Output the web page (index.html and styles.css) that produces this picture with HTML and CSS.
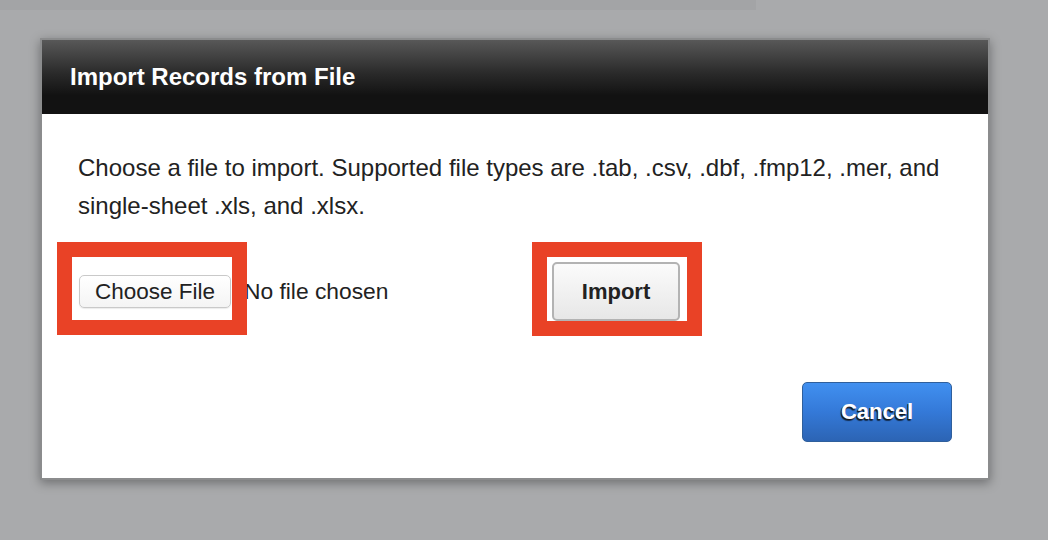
FILE: index.html
```html
<!DOCTYPE html>
<html lang="en">
<head>
<meta charset="utf-8">
<title>Import Records from File</title>
<link rel="stylesheet" href="styles.css">
</head>
<body>
<div class="page-strip"></div>
<div class="dialog">
  <div class="dialog-header">Import Records from File</div>
  <div class="dialog-body">
    <p class="desc">Choose a file to import. Supported file types are .tab, .csv, .dbf, .fmp12, .mer, and single-sheet .xls, and .xlsx.</p>
    <div class="controls">
      <div class="file-input">
        <button class="file-btn" type="button">Choose File</button>
        <span class="file-name">No file chosen</span>
      </div>
      <button class="import-btn" type="button">Import</button>
      <span class="mark mark-file"></span>
      <span class="mark mark-import"></span>
    </div>
    <div class="footer">
      <button class="cancel-btn" type="button">Cancel</button>
    </div>
  </div>
</div>
</body>
</html>
```

FILE: styles.css
```css
html, body {
  margin: 0;
  padding: 0;
}
body {
  background: #a9aaac;
  width: 1048px;
  height: 540px;
  overflow: hidden;
  font-family: "Liberation Sans", Arial, sans-serif;
}
.page-strip {
  width: 756px;
  height: 10px;
  background: #a3a4a6;
}
.dialog {
  width: 946px;
  margin: 28px 0 0 40px;
  border: 2px solid #8b8c8d;
  background: #fff;
  box-shadow: 0 3px 10px rgba(0, 0, 0, 0.35);
}
.dialog-header {
  height: 74px;
  line-height: 74px;
  padding-left: 28px;
  color: #fff;
  font-weight: bold;
  font-size: 24px;
  background: linear-gradient(to bottom, #585858 0%, #2a2a2a 45%, #121212 75%, #121212 100%);
}
.dialog-body {
  padding: 35px 36px 36px 36px;
}
.desc {
  margin: 0;
  font-size: 24px;
  line-height: 38px;
  color: #222;
}
.controls {
  position: relative;
  margin-top: 37px;
  height: 59px;
  display: grid;
  grid-template-columns: 474px auto;
  align-items: center;
}
.file-input {
  display: flex;
  align-items: center;
  margin-left: 1px;
  gap: 13px;
}
.file-btn {
  width: 152px;
  height: 33px;
  padding: 0;
  border: 1px solid #c9c9c9;
  border-radius: 5px;
  background: linear-gradient(to bottom, #ffffff, #f4f4f4);
  box-shadow: 0 1px 1px rgba(0, 0, 0, 0.08);
  font-family: "Liberation Sans", Arial, sans-serif;
  font-size: 22.5px;
  color: #222;
}
.file-name {
  font-size: 22.8px;
  color: #222;
}
.import-btn {
  width: 128px;
  height: 59px;
  padding: 0;
  border: 2px solid #b3b3b3;
  border-radius: 5px;
  background: linear-gradient(to bottom, #fbfbfb, #e7e7e7);
  font-family: "Liberation Sans", Arial, sans-serif;
  font-weight: bold;
  font-size: 22px;
  color: #222;
}
.mark {
  position: absolute;
  border: 15px solid #e94226;
  box-sizing: border-box;
}
.mark-file {
  left: -21px;
  top: -20px;
  width: 190px;
  height: 93px;
}
.mark-import {
  left: 454px;
  top: -20px;
  width: 170px;
  height: 94px;
}
.footer {
  display: flex;
  justify-content: flex-end;
  margin-top: 61px;
}
.cancel-btn {
  width: 150px;
  height: 60px;
  padding: 0;
  border: 1px solid #2f5f9c;
  border-radius: 5px;
  background: linear-gradient(to bottom, #4190f0 0%, #3479d8 50%, #2c64b4 100%);
  font-family: "Liberation Sans", Arial, sans-serif;
  font-weight: bold;
  font-size: 22px;
  color: #fff;
  text-shadow: -1px 1px 0 #1a1a1a, -1px 2px 1px rgba(0, 0, 0, 0.6);
}
```
